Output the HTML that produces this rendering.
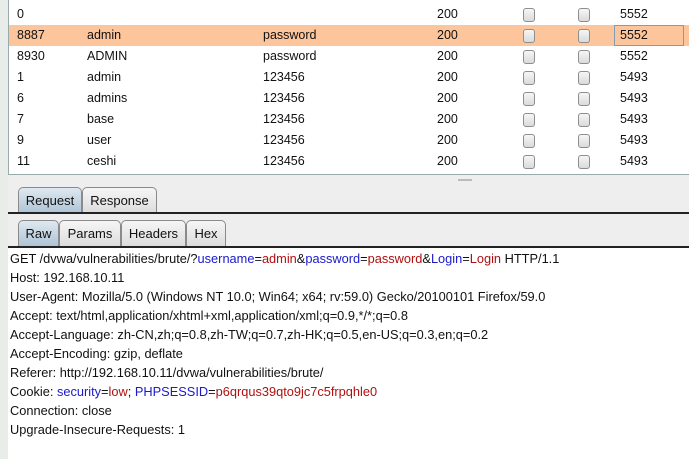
<!DOCTYPE html>
<html><head><style>
*{margin:0;padding:0;box-sizing:border-box}
body{width:689px;height:459px;overflow:hidden;background:#eeeeee;font-family:"Liberation Sans",Arial,sans-serif;font-size:12.5px;color:#111;position:relative}
.strip{position:absolute;left:0;top:0;width:8px;height:459px;background:#e9ede9}
.tbl{position:absolute;left:8px;top:0;width:681px;height:175px;background:#fff;border-left:1px solid #9aa;border-bottom:1px solid #9aa}
.row{position:absolute;left:0;width:681px;height:21px;line-height:21px}
.row span{position:absolute}
.sel{background:#fdc59b}
.cb{position:absolute;width:12px;height:14px;top:4px;border:1px solid #8e8e8e;border-radius:3px;background:linear-gradient(#f6f6f6,#dadada)}
.tab{position:absolute;height:26px;border:1px solid #8a8a8a;border-bottom:none;border-radius:5px 5px 0 0;background:linear-gradient(#f6f6f6,#dcdcdc);text-align:center;line-height:25px;font-size:13px}
.tab.on{background:linear-gradient(#dfe8f0,#aec4d6)}
.line{position:absolute;left:8px;width:681px;height:2px;background:#222}
.raw{position:absolute;left:8px;top:248px;width:681px;height:211px;background:#fff}
.raw div{position:absolute;left:2px;white-space:nowrap;font-size:12.8px}
.b{color:#1a1acc}.r{color:#b01010}
</style></head><body>
<div class="strip"></div>
<div class="tbl">
 <div class="row" style="top:4px"><span style="left:8px">0</span><span style="left:428px">200</span><div class="cb" style="left:514px"></div><div class="cb" style="left:569px"></div><span style="left:611px">5552</span></div>
 <div class="row sel" style="top:25px"><span style="left:8px">8887</span><span style="left:78px">admin</span><span style="left:254px">password</span><span style="left:428px">200</span><div class="cb" style="left:514px"></div><div class="cb" style="left:569px"></div><div style="position:absolute;left:605px;top:0;width:70px;height:21px;border:1px solid #7f9db9"></div><span style="left:611px">5552</span></div>
 <div class="row" style="top:46px"><span style="left:8px">8930</span><span style="left:78px">ADMIN</span><span style="left:254px">password</span><span style="left:428px">200</span><div class="cb" style="left:514px"></div><div class="cb" style="left:569px"></div><span style="left:611px">5552</span></div>
 <div class="row" style="top:67px"><span style="left:8px">1</span><span style="left:78px">admin</span><span style="left:254px">123456</span><span style="left:428px">200</span><div class="cb" style="left:514px"></div><div class="cb" style="left:569px"></div><span style="left:611px">5493</span></div>
 <div class="row" style="top:88px"><span style="left:8px">6</span><span style="left:78px">admins</span><span style="left:254px">123456</span><span style="left:428px">200</span><div class="cb" style="left:514px"></div><div class="cb" style="left:569px"></div><span style="left:611px">5493</span></div>
 <div class="row" style="top:109px"><span style="left:8px">7</span><span style="left:78px">base</span><span style="left:254px">123456</span><span style="left:428px">200</span><div class="cb" style="left:514px"></div><div class="cb" style="left:569px"></div><span style="left:611px">5493</span></div>
 <div class="row" style="top:130px"><span style="left:8px">9</span><span style="left:78px">user</span><span style="left:254px">123456</span><span style="left:428px">200</span><div class="cb" style="left:514px"></div><div class="cb" style="left:569px"></div><span style="left:611px">5493</span></div>
 <div class="row" style="top:151px"><span style="left:8px">11</span><span style="left:78px">ceshi</span><span style="left:254px">123456</span><span style="left:428px">200</span><div class="cb" style="left:514px"></div><div class="cb" style="left:569px"></div><span style="left:611px">5493</span></div>
</div>
<div style="position:absolute;left:458px;top:179px;width:14px;height:2px;background:#bbb"></div>
<div class="tab on" style="left:18px;top:187px;width:64px">Request</div>
<div class="tab" style="left:82px;top:187px;width:75px">Response</div>
<div class="line" style="top:212px"></div>
<div class="tab on" style="left:18px;top:220px;width:41px">Raw</div>
<div class="tab" style="left:59px;top:220px;width:62px">Params</div>
<div class="tab" style="left:121px;top:220px;width:65px">Headers</div>
<div class="tab" style="left:186px;top:220px;width:40px">Hex</div>
<div class="line" style="top:246px"></div>
<div class="raw">
<div style="top:3px">GET /dvwa/vulnerabilities/brute/?<span class="b">username</span>=<span class="r">admin</span>&amp;<span class="b">password</span>=<span class="r">password</span>&amp;<span class="b">Login</span>=<span class="r">Login</span> HTTP/1.1</div>
<div style="top:22px">Host: 192.168.10.11</div>
<div style="top:41px">User-Agent: Mozilla/5.0 (Windows NT 10.0; Win64; x64; rv:59.0) Gecko/20100101 Firefox/59.0</div>
<div style="top:60px">Accept: text/html,application/xhtml+xml,application/xml;q=0.9,*/*;q=0.8</div>
<div style="top:79px">Accept-Language: zh-CN,zh;q=0.8,zh-TW;q=0.7,zh-HK;q=0.5,en-US;q=0.3,en;q=0.2</div>
<div style="top:98px">Accept-Encoding: gzip, deflate</div>
<div style="top:117px">Referer: http://192.168.10.11/dvwa/vulnerabilities/brute/</div>
<div style="top:136px">Cookie: <span class="b">security</span>=<span class="r">low</span>; <span class="b">PHPSESSID</span>=<span class="r">p6qrqus39qto9jc7c5frpqhle0</span></div>
<div style="top:155px">Connection: close</div>
<div style="top:174px">Upgrade-Insecure-Requests: 1</div>
</div>
</body></html>
